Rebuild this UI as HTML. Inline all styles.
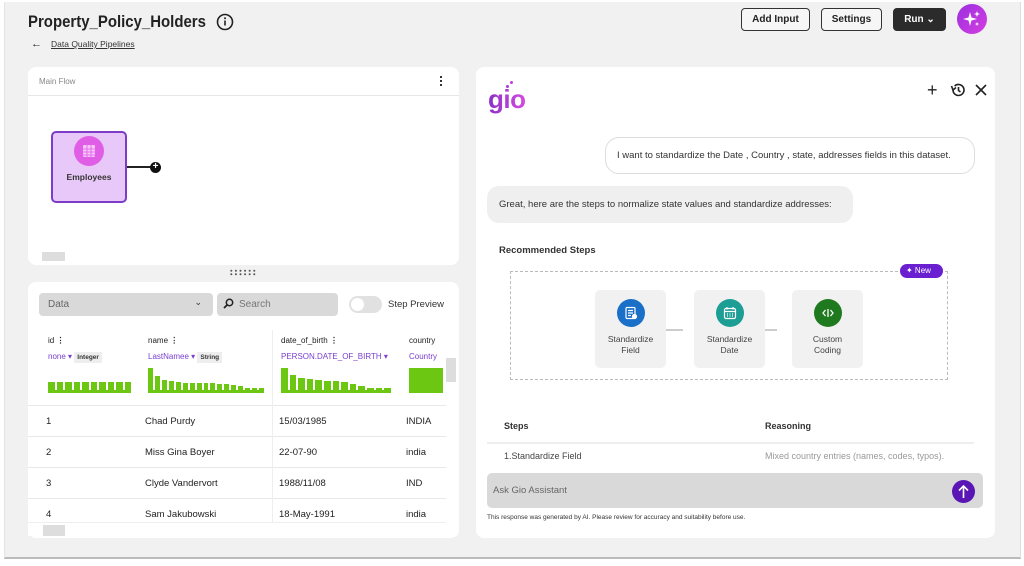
<!DOCTYPE html>
<html><head><meta charset="utf-8"><style>
*{box-sizing:border-box;margin:0;padding:0}
body{width:1024px;height:566px;background:#fff;font-family:"Liberation Sans",sans-serif;color:#222;position:relative;overflow:hidden}
.a{position:absolute}
.frame{left:4px;top:2px;width:1017px;height:557px;background:#f1f1f1;border-bottom:2px solid #bbb;border-right:1px solid #ddd;border-left:1px solid #e4e4e4}
.panel{background:#fff;border-radius:8px}
.btn{border:1.5px solid #333;border-radius:4px;font-size:10px;font-weight:bold;display:flex;align-items:center;justify-content:center;background:#f6f6f6}
.t{font-size:9.5px;white-space:nowrap}
.hist{display:flex;align-items:flex-end;gap:2px;height:22px;border-bottom:3px solid #6cc712}
.hist i{display:block;background:#6cc712;flex:1}
.row{left:28px;width:418px;height:31px;border-top:1px solid #e8e8e8}
.card{width:71px;height:78px;background:#f1f1f1;border-radius:5px;text-align:center;font-size:8.5px;color:#444;line-height:11px}
.card .c{width:28px;height:28px;border-radius:50%;margin:9px auto 7px;display:flex;align-items:center;justify-content:center}
</style></head><body>
<div class="a frame"></div>
<div class="a" style="left:28px;top:12px;font-size:17px;font-weight:bold;color:#222;transform:scaleX(0.88);transform-origin:left;white-space:nowrap">Property_Policy_Holders</div>
<svg class="a" style="left:216px;top:13px" width="18" height="18" viewBox="0 0 18 18"><circle cx="9" cy="9" r="7.5" fill="none" stroke="#222" stroke-width="1.6"/><rect x="8.2" y="7.5" width="1.6" height="5" fill="#222"/><circle cx="9" cy="5.3" r="1" fill="#222"/></svg>
<div class="a t" style="left:31px;top:38px;font-size:11px">&#8592;</div>
<div class="a" style="left:51px;top:39px;font-size:8.5px;text-decoration:underline;color:#333">Data Quality Pipelines</div>

<div class="a btn" style="left:741px;top:8px;width:69px;height:23px">Add Input</div>
<div class="a btn" style="left:821px;top:8px;width:61px;height:23px">Settings</div>
<div class="a btn" style="left:893px;top:8px;width:53px;height:23px;background:#2b2b2b;color:#fff;border-color:#2b2b2b">Run &#8964;</div>
<div class="a" style="left:957px;top:4px;width:30px;height:30px;border-radius:50%;background:linear-gradient(135deg,#9b2fe0,#d43ee0)"></div>
<svg class="a" style="left:962px;top:9px" width="20" height="20" viewBox="0 0 20 20" fill="#fff"><path d="M8 3 L9.5 8.5 L15 10 L9.5 11.5 L8 17 L6.5 11.5 L1 10 L6.5 8.5Z"/><path d="M15 2 L15.8 4.2 L18 5 L15.8 5.8 L15 8 L14.2 5.8 L12 5 L14.2 4.2Z"/><path d="M15 13 L15.6 14.4 L17 15 L15.6 15.6 L15 17 L14.4 15.6 L13 15 L14.4 14.4Z"/></svg>

<!-- top-left panel -->
<div class="a panel" style="left:28px;top:67px;width:431px;height:198px"></div>
<div class="a" style="left:39px;top:77px;font-size:8px;color:#888">Main Flow</div>
<div class="a" style="left:28px;top:95px;width:431px;height:1px;background:#e6e6e6"></div>
<div class="a" style="left:440px;top:76px;width:2px;height:10px;background:repeating-linear-gradient(#333 0 2px,transparent 2px 4px)"></div>
<div class="a" style="left:51px;top:131px;width:76px;height:72px;background:#e8c8f8;border:2px solid #7d3cc8;border-radius:5px"></div>
<div class="a" style="left:74px;top:136px;width:30px;height:30px;border-radius:50%;background:#e05ee6"></div>
<svg class="a" style="left:81px;top:143px" width="16" height="16" viewBox="0 0 16 16"><rect x="2" y="2" width="12" height="12" rx="1.5" fill="#f6c6f8"/><path d="M2 6h12M2 9h12M2 12h12M6 2v12M10 2v12" stroke="#e05ee6" stroke-width="0.8"/></svg>
<div class="a" style="left:51px;top:172px;width:76px;text-align:center;font-size:8.5px;font-weight:bold;color:#333">Employees</div>
<div class="a" style="left:127px;top:166px;width:24px;height:1.5px;background:#222"></div>
<div class="a" style="left:150px;top:162px;width:11px;height:11px;border-radius:50%;background:#111;color:#fff;font-size:10px;line-height:10px;text-align:center;font-weight:bold">+</div>
<div class="a" style="left:42px;top:252px;width:23px;height:9px;background:#ddd"></div>
<div class="a" style="left:229px;top:269px;width:28px;height:7px;background:radial-gradient(circle,#555 0.8px,transparent 1.2px) 0 0/4.6px 3.5px"></div>

<!-- bottom-left panel -->
<div class="a panel" style="left:28px;top:282px;width:431px;height:256px"></div>
<div class="a" style="left:39px;top:293px;width:174px;height:23px;background:#d9d9d9;border-radius:4px;font-size:10px;color:#666;padding:6px 9px">Data<span style="position:absolute;right:11px;top:4px;font-size:9px;color:#333">&#8964;</span></div>
<div class="a" style="left:217px;top:293px;width:121px;height:23px;background:#d9d9d9;border-radius:4px;font-size:10px;color:#777;padding:6px 0 0 22px">Search</div>
<svg class="a" style="left:223px;top:298px" width="11" height="11" viewBox="0 0 11 11"><circle cx="6.5" cy="4.5" r="3.2" fill="none" stroke="#222" stroke-width="1.5"/><path d="M4.3 6.7 L1 10" stroke="#222" stroke-width="1.8"/></svg>
<div class="a" style="left:349px;top:296px;width:33px;height:17px;border-radius:9px;background:#e1e1e1"></div>
<div class="a" style="left:351px;top:298px;width:13px;height:13px;border-radius:50%;background:#fff"></div>
<div class="a t" style="left:388px;top:299px;font-size:9.5px;color:#333">Step Preview</div>

<div class="a t" style="left:48px;top:336px;font-size:8px">id <b>&#8942;</b></div>
<div class="a t" style="left:148px;top:336px;font-size:8px">name <b>&#8942;</b></div>
<div class="a t" style="left:281px;top:336px;font-size:8px">date_of_birth <b>&#8942;</b></div>
<div class="a t" style="left:409px;top:336px;font-size:8px">country</div>
<div class="a t" style="left:48px;top:352px;font-size:8px;color:#7a3fd0">none &#9662; <span style="background:#eee;color:#333;font-size:6.5px;padding:2px 3px;font-weight:bold">Integer</span></div>
<div class="a t" style="left:148px;top:352px;font-size:8px;color:#7a3fd0">LastNamee &#9662; <span style="background:#eee;color:#333;font-size:6.5px;padding:2px 3px;font-weight:bold">String</span></div>
<div class="a t" style="left:281px;top:352px;font-size:8px;color:#7a3fd0">PERSON.DATE_OF_BIRTH &#9662;</div>
<div class="a t" style="left:409px;top:352px;font-size:8px;color:#7a3fd0">Country</div>
<div class="a hist" style="left:48px;top:371px;width:83px"><i style="height:8px"></i><i style="height:8px"></i><i style="height:8px"></i><i style="height:8px"></i><i style="height:8px"></i><i style="height:8px"></i><i style="height:8px"></i><i style="height:8px"></i><i style="height:8px"></i><i style="height:8px"></i></div>
<div class="a hist" style="left:148px;top:371px;width:116px"><i style="height:22px"></i><i style="height:14px"></i><i style="height:10px"></i><i style="height:9px"></i><i style="height:8px"></i><i style="height:7px"></i><i style="height:7px"></i><i style="height:7px"></i><i style="height:7px"></i><i style="height:7px"></i><i style="height:6px"></i><i style="height:6px"></i><i style="height:5px"></i><i style="height:4px"></i><i style="height:2px"></i><i style="height:2px"></i><i style="height:2px"></i></div>
<div class="a hist" style="left:281px;top:371px;width:110px"><i style="height:22px"></i><i style="height:15px"></i><i style="height:12px"></i><i style="height:11px"></i><i style="height:10px"></i><i style="height:9px"></i><i style="height:9px"></i><i style="height:8px"></i><i style="height:6px"></i><i style="height:4px"></i><i style="height:2px"></i><i style="height:2px"></i><i style="height:2px"></i></div>
<div class="a hist" style="left:409px;top:371px;width:34px"><i style="height:22px"></i></div>
<div class="a row" style="top:405px"></div><div class="a row" style="top:436px"></div><div class="a row" style="top:467px"></div><div class="a row" style="top:498px"></div>
<div class="a" style="left:272px;top:330px;width:1px;height:195px;background:#eee"></div>
<div class="a t" style="left:46px;top:416px">1</div><div class="a t" style="left:145px;top:416px">Chad Purdy</div><div class="a t" style="left:279px;top:416px">15/03/1985</div><div class="a t" style="left:406px;top:416px">INDIA</div>
<div class="a t" style="left:46px;top:447px">2</div><div class="a t" style="left:145px;top:447px">Miss Gina Boyer</div><div class="a t" style="left:279px;top:447px">22-07-90</div><div class="a t" style="left:406px;top:447px">india</div>
<div class="a t" style="left:46px;top:478px">3</div><div class="a t" style="left:145px;top:478px">Clyde Vandervort</div><div class="a t" style="left:279px;top:478px">1988/11/08</div><div class="a t" style="left:406px;top:478px">IND</div>
<div class="a t" style="left:46px;top:509px">4</div><div class="a t" style="left:145px;top:509px">Sam Jakubowski</div><div class="a t" style="left:279px;top:509px">18-May-1991</div><div class="a t" style="left:406px;top:509px">india</div>
<div class="a" style="left:446px;top:358px;width:10px;height:24px;background:#ddd"></div>
<div class="a" style="left:28px;top:522px;width:418px;height:14px;background:#fff;border-top:1px solid #eee"></div>
<div class="a" style="left:43px;top:525px;width:22px;height:11px;background:#ddd"></div>

<!-- right panel -->
<div class="a panel" style="left:476px;top:67px;width:519px;height:471px"></div>
<div class="a" style="left:488px;top:84px;font-size:26px;font-weight:bold;letter-spacing:-0.5px;background:linear-gradient(90deg,#8b2fc9,#d64bdf);-webkit-background-clip:text;color:transparent">gio</div>
<div class="a" style="left:506px;top:85px;width:3px;height:3px;border-radius:50%;background:#a43ad8"></div>
<div class="a" style="left:510px;top:81px;width:3px;height:3px;border-radius:50%;background:#c040d8"></div>
<div class="a" style="left:927px;top:80px;font-size:18px;color:#222">+</div>
<svg class="a" style="left:950px;top:82px" width="16" height="16" viewBox="0 0 16 16" fill="none" stroke="#222" stroke-width="1.6"><path d="M3 8 A5.5 5.5 0 1 0 4.6 4.1"/><path d="M1.5 4 L3 8 L6 5.5"/><path d="M8.5 5 V8.5 L10.5 10"/></svg>
<svg class="a" style="left:975px;top:84px" width="12" height="12" viewBox="0 0 12 12" stroke="#222" stroke-width="1.6"><path d="M1 1 L11 11 M11 1 L1 11"/></svg>

<div class="a" style="left:605px;top:137px;width:370px;height:37px;border:1px solid #ddd;border-radius:14px;font-size:9.5px;padding:12px 0 0 11px;color:#333;white-space:nowrap">I want to standardize the Date , Country , state, addresses fields in this dataset.</div>
<div class="a" style="left:487px;top:186px;width:366px;height:37px;background:#efefef;border-radius:12px;font-size:9.5px;padding:13px 0 0 12px;color:#333;white-space:nowrap">Great, here are the steps to normalize state values and standardize addresses:</div>
<div class="a t" style="left:499px;top:245px;font-weight:bold;font-size:9.5px;color:#333">Recommended Steps</div>
<div class="a" style="left:510px;top:271px;width:438px;height:109px;border:1.2px dashed #bbb"></div>
<div class="a" style="left:900px;top:264px;width:43px;height:14px;background:#6a1fd0;border-radius:7px;color:#fff;font-size:8px;padding:2px 0 0 6px">&#10022; New</div>
<div class="a" style="left:659px;top:329px;width:24px;height:1.5px;background:#ccc"></div>
<div class="a" style="left:753px;top:329px;width:24px;height:1.5px;background:#ccc"></div>
<div class="a card" style="left:595px;top:290px"><div class="c" style="background:#1a6fc8"><svg width="14" height="14" viewBox="0 0 14 14" fill="none" stroke="#fff" stroke-width="1.2"><rect x="2" y="1.5" width="9" height="11" rx="1"/><path d="M4 4.5h5M4 7h5M4 9.5h3"/><circle cx="10.5" cy="10.5" r="2" fill="#fff"/></svg></div>Standardize<br>Field</div>
<div class="a card" style="left:694px;top:290px"><div class="c" style="background:#1c9e95"><svg width="14" height="14" viewBox="0 0 14 14" fill="none" stroke="#fff" stroke-width="1.2"><rect x="1.5" y="2.5" width="11" height="10" rx="1.5"/><path d="M1.5 5.5h11M4 1v2.5M10 1v2.5M4 8h1M6.5 8h1M9 8h1M4 10h1M6.5 10h1M9 10h1"/></svg></div>Standardize<br>Date</div>
<div class="a card" style="left:792px;top:290px"><div class="c" style="background:#1f7a1f"><svg width="14" height="14" viewBox="0 0 14 14" fill="none" stroke="#fff" stroke-width="1.3"><path d="M4.5 4 L2 7 L4.5 10M9.5 4 L12 7 L9.5 10M7 3v8"/></svg></div>Custom<br>Coding</div>

<div class="a t" style="left:504px;top:421px;font-weight:bold;font-size:9px;color:#333">Steps</div>
<div class="a t" style="left:765px;top:421px;font-weight:bold;font-size:9px;color:#333">Reasoning</div>
<div class="a" style="left:487px;top:442px;width:487px;height:1.5px;background:#eee"></div>
<div class="a t" style="left:504px;top:451px;font-size:9px;color:#444">1.Standardize Field</div>
<div class="a t" style="left:765px;top:451px;font-size:9px;color:#999">Mixed country entries (names, codes, typos).</div>
<div class="a" style="left:487px;top:473px;width:496px;height:35px;background:#d9d9d9;border-radius:5px;font-size:9.5px;color:#666;padding:12px 0 0 6px">Ask Gio Assistant</div>
<div class="a" style="left:952px;top:480px;width:23px;height:23px;border-radius:50%;background:#5a16b4"></div>
<svg class="a" style="left:957px;top:484px" width="13" height="15" viewBox="0 0 13 15" stroke="#fff" stroke-width="1.6" fill="none"><path d="M6.5 14V2M2 6.5 L6.5 2 L11 6.5"/></svg>
<div class="a t" style="left:487px;top:514px;font-size:6.5px;color:#333">This response was generated by AI. Please review for accuracy and suitability before use.</div>
</body></html>
